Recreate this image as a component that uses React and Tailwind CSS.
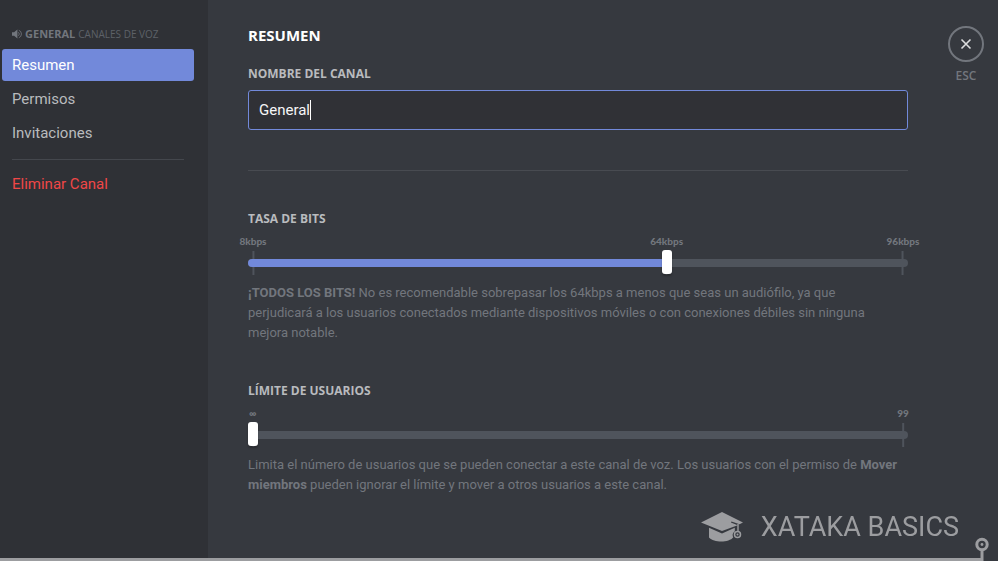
import { useState } from "react";

const TABS = ["Resumen", "Permisos", "Invitaciones"];

function SpeakerIcon() {
  return (
    <svg viewBox="0 0 12 12" className="size-2.5 shrink-0" aria-hidden="true">
      <path d="M0 4h2.500L6.500 0.500v11L2.500 8H0z" fill="currentColor" />
      <path d="M7.600 3.900a2.600 2.600 0 0 1 0 4.200M8.200 1.500a4.800 4.800 0 0 1 0 9" fill="none" stroke="currentColor" />
    </svg>
  );
}

function Slider({ id, label, min, max, value, onChange, marks, children }) {
  const ratio = (value - min) / (max - min);
  const fill = ratio === 0 ? "0px" : `calc(5px + (100% - 10px) * ${ratio})`;

  return (
    <section className="mt-10">
      <label
        htmlFor={id}
        className="block font-['Open_Sans',sans-serif] text-[12px] leading-4 font-bold text-[#b9bbbe]"
      >
        {label}
      </label>

      <div className="relative mt-2 h-10">
        {marks.map((m) => (
          <div
            key={m.text}
            className="absolute top-0 flex -translate-x-1/2 flex-col items-center"
            style={{ left: `calc(5px + (100% - 10px) * ${(m.at - min) / (max - min)})` }}
          >
            <span className="font-['Lato',sans-serif] text-[10px] leading-3 font-black text-[#72767d]">
              {m.text}
            </span>
            <span className="mt-1 h-6 w-0.5 bg-[#4f545c]" />
          </div>
        ))}
        <div className="absolute inset-x-0 top-6 h-2 overflow-hidden rounded-full bg-[#4f545c]">
          <div className="h-full bg-[#7289da]" style={{ width: fill }} />
        </div>
        <input
          id={id}
          type="range"
          min={min}
          max={max}
          value={value}
          onChange={(e) => onChange(Number(e.target.value))}
          className="absolute inset-x-0 top-[15px] h-6 w-full cursor-pointer appearance-none bg-transparent outline-none [&::-webkit-slider-thumb]:h-6 [&::-webkit-slider-thumb]:w-2.5 [&::-webkit-slider-thumb]:appearance-none [&::-webkit-slider-thumb]:rounded-[3px] [&::-webkit-slider-thumb]:bg-white [&::-webkit-slider-thumb]:shadow-[0_2px_2px_rgba(0,0,0,0.25)]"
        />
      </div>

      <p className="mt-2 pr-2 text-[13px] leading-5 text-[#72767d]">{children}</p>
    </section>
  );
}

function Watermark() {
  return (
    <div className="pointer-events-none fixed inset-x-0 bottom-0 text-[#9c9da0]">
      <div className="flex items-center justify-end gap-[18px] pr-[39px] pb-[15px]">
        <svg viewBox="0 0 42 30" className="h-[30px] w-[42px]" aria-hidden="true">
          <path d="M0 10.500 21 0l21 10.500-3.500 1.700-8-2.600-.6 1 6.800 2.600L21 19z" fill="currentColor" />
          <path d="M8 15.800 21 21.400l12.800-5.600v3.500a4.300 4.300 0 0 0-1.500 6C28 31 13 31 8 25.500z" fill="currentColor" />
          <path d="M37 12v7.500" stroke="currentColor" strokeWidth="1.400" />
          <circle cx="36.500" cy="22.500" r="3" fill="none" stroke="currentColor" strokeWidth="1.500" />
          <circle cx="36.500" cy="22.500" r="1" fill="currentColor" />
        </svg>
        <span className="text-[27px] leading-8">XATAKA BASICS</span>
      </div>
      <div className="mr-[15px] h-[3px] bg-current" />
      <svg viewBox="0 0 14 24" className="absolute right-[9px] bottom-0 h-6 w-3.5" aria-hidden="true">
        <circle cx="7" cy="7.500" r="5.200" fill="none" stroke="currentColor" strokeWidth="3" />
        <circle cx="7" cy="7.500" r="1.400" fill="currentColor" />
        <path d="M7 13v11" stroke="currentColor" strokeWidth="3" />
      </svg>
    </div>
  );
}

export default function App() {
  const [tab, setTab] = useState("Resumen");
  const [name, setName] = useState("General");
  const [bitrate, setBitrate] = useState(64);
  const [limit, setLimit] = useState(0);

  return (
    <div className="flex min-h-screen bg-[#36393f] font-['Roboto',sans-serif]">
      <aside className="w-52 shrink-0 bg-[#2f3136] pt-[26px] pr-3.5 pl-0.5">
        <h2 className="flex items-center gap-[3px] px-2.5 font-['Open_Sans',sans-serif] text-[11px] leading-4 text-[#72767d]">
          <SpeakerIcon />
          <span className="font-bold">GENERAL</span>
          <span className="text-[10px] text-[#5d6168]">CANALES DE VOZ</span>
        </h2>
        <nav className="mt-[7px] flex flex-col gap-0.5">
          {TABS.map((item) => (
            <button
              key={item}
              type="button"
              onClick={() => setTab(item)}
              className={`h-8 cursor-pointer rounded-[3px] px-2.5 text-left text-[15px] leading-5 ${
                item === tab ? "bg-[#7289da] text-white" : "text-[#b9bbbe]"
              }`}
            >
              {item}
            </button>
          ))}
          <hr className="mx-2.5 mt-2 mb-1.5 border-[#44474d]" />
          <button
            type="button"
            className="h-8 cursor-pointer rounded-[3px] px-2.5 text-left text-[15px] leading-5 text-[#f04747]"
          >
            Eliminar Canal
          </button>
        </nav>
      </aside>

      <main className="flex flex-1 gap-10 pr-3.5 pl-10">
        <div className="min-w-0 flex-1 pt-[25px] pb-10">
          <h1 className="font-['Open_Sans',sans-serif] text-[15px] leading-5 font-bold text-white">RESUMEN</h1>

          <label
            htmlFor="name"
            className="mt-[21px] block font-['Open_Sans',sans-serif] text-[12px] leading-4 font-bold text-[#b9bbbe]"
          >
            NOMBRE DEL CANAL
          </label>
          <div className="mt-2 flex h-10 items-center rounded-[3px] border border-[#7289da] bg-[#303136] px-2.5">
            <input
              id="name"
              type="text"
              value={name}
              onChange={(e) => setName(e.target.value)}
              className="field-sizing-content max-w-full bg-transparent text-[15px] leading-5 text-[#f6f6f7] caret-transparent outline-none"
            />
            <span className="h-5 w-px bg-white" />
          </div>

          <hr className="mt-10 border-[#484b51]" />

          <Slider
            id="bitrate"
            label="TASA DE BITS"
            min={8}
            max={96}
            value={bitrate}
            onChange={setBitrate}
            marks={[
              { at: 8, text: "8kbps" },
              { at: 64, text: "64kbps" },
              { at: 96, text: "96kbps" },
            ]}
          >
            <strong>¡TODOS LOS BITS!</strong> No es recomendable sobrepasar los 64kbps a menos que seas un
            audiófilo, ya que perjudicará a los usuarios conectados mediante dispositivos móviles o con
            conexiones débiles sin ninguna mejora notable.
          </Slider>

          <Slider
            id="limit"
            label="LÍMITE DE USUARIOS"
            min={0}
            max={99}
            value={limit}
            onChange={setLimit}
            marks={[
              { at: 0, text: "∞" },
              { at: 99, text: "99" },
            ]}
          >
            Limita el número de usuarios que se pueden conectar a este canal de voz. Los usuarios con el
            permiso de <strong>Mover miembros</strong> pueden ignorar el límite y mover a otros usuarios a
            este canal.
          </Slider>
        </div>

        <div className="flex w-9 shrink-0 flex-col items-center pt-[26px]">
          <button
            type="button"
            aria-label="Cerrar"
            className="flex size-9 cursor-pointer items-center justify-center rounded-full border-2 border-[#72767d] text-[#dcddde]"
          >
            <svg viewBox="0 0 12 12" className="size-3" aria-hidden="true">
              <path d="M1.500 1.500l9 9M10.500 1.500l-9 9" stroke="currentColor" strokeWidth="1.600" />
            </svg>
          </button>
          <span className="mt-1.5 font-['Open_Sans',sans-serif] text-[12px] leading-4 font-semibold text-[#72767d]">
            ESC
          </span>
        </div>
      </main>

      <Watermark />
    </div>
  );
}
